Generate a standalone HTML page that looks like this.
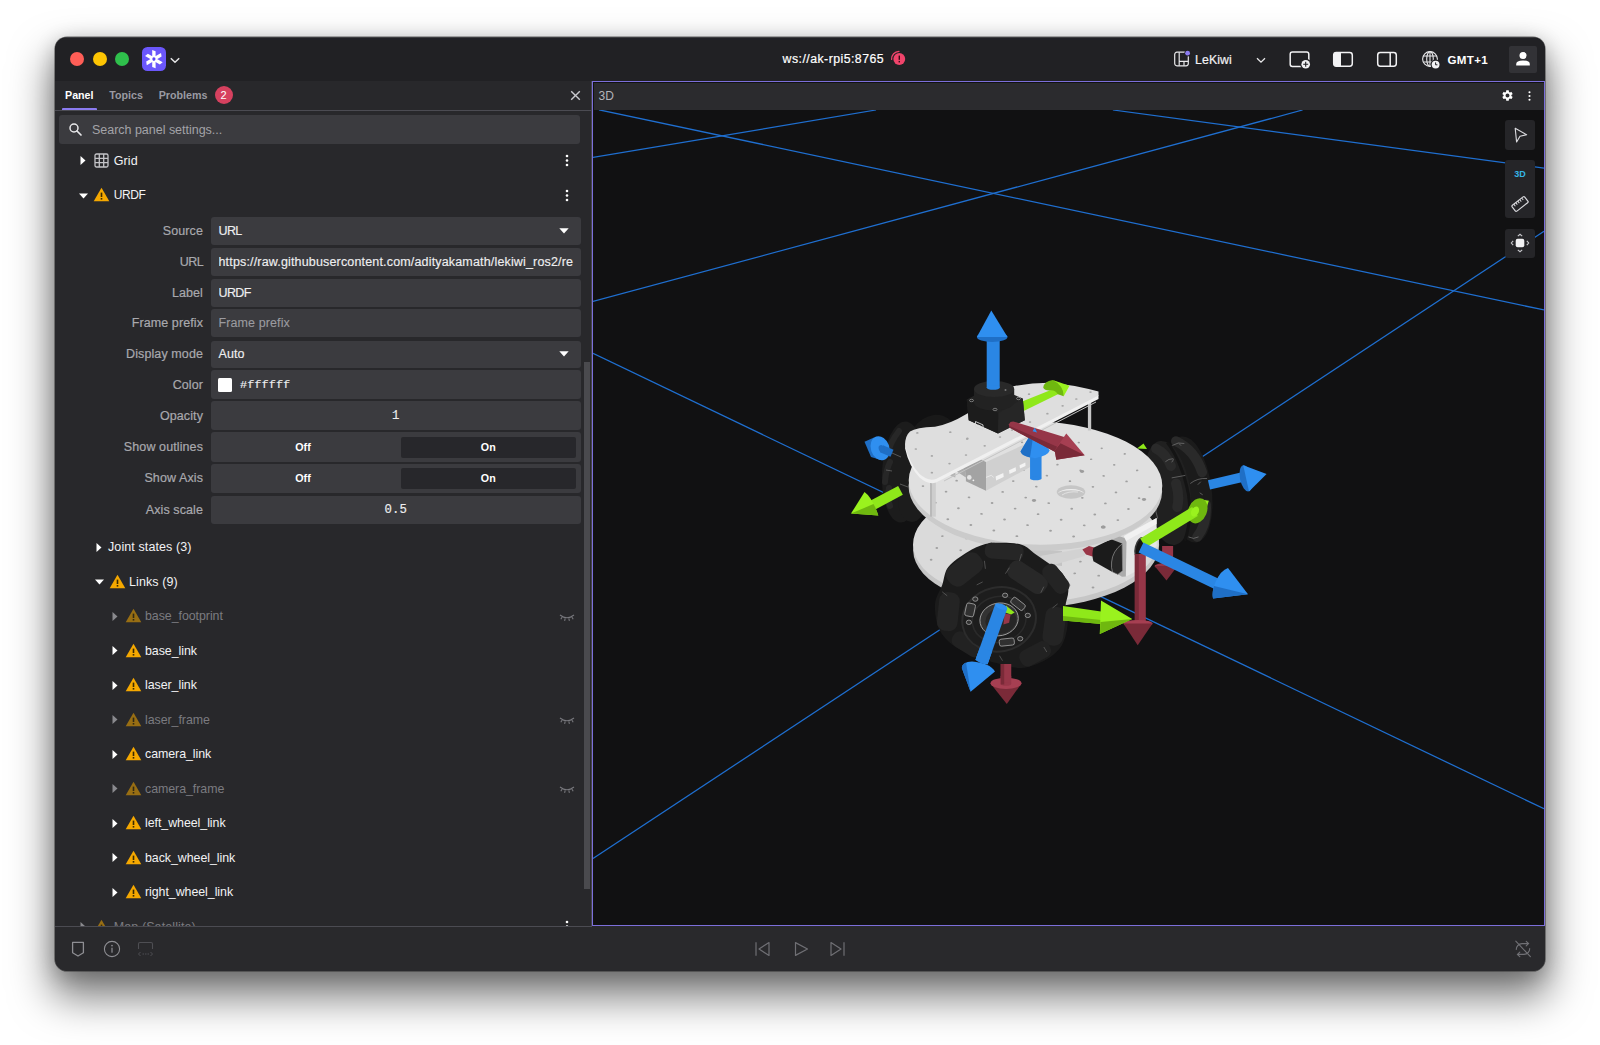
<!DOCTYPE html>
<html lang="en">
<head>
<meta charset="utf-8">
<title>Foxglove - LeKiwi</title>
<style>
*{box-sizing:border-box;margin:0;padding:0}
html,body{width:1600px;height:1045px;overflow:hidden;background:#fff}
body{font-family:"Liberation Sans",sans-serif;font-size:12.5px;letter-spacing:.1px;color:#e6e6e8;position:relative}
.abs{position:absolute}
#shadow{position:absolute;left:55px;top:37px;width:1490px;height:934px;border-radius:12px;
 box-shadow:0 23px 40px 4px rgba(0,0,0,.50),0 5px 20px 1px rgba(0,0,0,.20),0 0 0 .6px rgba(0,0,0,.55)}
#win{position:absolute;left:55px;top:37px;width:1490px;height:934px;border-radius:12px;overflow:hidden;background:#28282b}
#win>*{position:absolute}
/* coordinates inside #win are page coords minus (55,37); use wrapper shifted so children can use page coords */
#pg{left:-55px;top:-37px;width:1600px;height:1045px}
#pg>*{position:absolute}
#titlebar{left:55px;top:37px;width:1490px;height:44px;background:#212124;box-shadow:inset 0 1px 0 rgba(255,255,255,.13)}
.tl{position:absolute;top:52px;width:14px;height:14px;border-radius:50%}
.t{position:absolute;white-space:nowrap;line-height:16px;height:16px}
.lbl{-webkit-text-stroke:.2px #a9a9ae;position:absolute;white-space:nowrap;line-height:16px;height:16px;right:1397px;color:#a9a9ae;text-align:right}
.box{position:absolute;left:211px;width:369.5px;height:28px;background:#3b3b3f;border-radius:3px}
.val{-webkit-text-stroke:.15px #eeeef0;position:absolute;white-space:nowrap;line-height:16px;height:16px;left:218.5px;color:#eeeef0}
.mono{font-family:"Liberation Mono",monospace}
</style>
</head>
<body>
<div id="shadow"></div>
<div id="win"><div id="pg">

<!-- TITLE BAR -->
<div id="titlebar"></div>
<div class="tl" style="left:70px;background:#fe5e57"></div>
<div class="tl" style="left:92.5px;background:#fdc503"></div>
<div class="tl" style="left:115px;background:#2fc04c"></div>


<!-- app icon -->
<div style="left:142px;top:47px;width:24px;height:24px;border-radius:5.5px;background:#6b57fb"></div>
<svg style="left:142px;top:47px" width="24" height="24" viewBox="0 0 24 24"><g fill="#fff" transform="translate(11.9 12.1)"><path d="M-1.7 -9.2 L1.7 -7.9 L1.7 9.2 L-1.7 7.9 Z" transform="rotate(0)"/><path d="M-1.7 -9.2 L1.7 -7.9 L1.7 9.2 L-1.7 7.9 Z" transform="rotate(60)"/><path d="M-1.7 -9.2 L1.7 -7.9 L1.7 9.2 L-1.7 7.9 Z" transform="rotate(120)"/><circle r="3.1"/></g><ellipse cx="11.9" cy="12.100" rx="1.600" ry="1.800" fill="#5a45f0"/></svg>
<svg style="left:170.3px;top:56.800px" width="10" height="7" viewBox="0 0 10 7"><path d="M0.800 1.200 L5 5.300 L9.200 1.200" stroke="#e4e4e6" stroke-width="1.500" fill="none"/></svg>

<!-- title -->
<div class="t" style="left:782.6px;top:51px;color:#fff;font-size:12.3px;letter-spacing:.46px;-webkit-text-stroke:.2px #fff" id="wsTxt">ws://ak-rpi5:8765</div>
<svg style="left:889px;top:49px" width="20" height="20" viewBox="0 0 20 20">
 <circle cx="10.3" cy="10" r="5.9" fill="#f0446b"/>
 <path d="M2.6 10.4 A7.7 7.7 0 0 1 10 2.3" stroke="#f0446b" stroke-width="1.3" fill="none" stroke-linecap="round"/>
 <rect x="9.6" y="6.6" width="1.4" height="4.2" fill="#3a0a16"/><rect x="9.6" y="11.9" width="1.4" height="1.5" fill="#3a0a16"/>
</svg>

<!-- layout -->
<svg style="left:1173px;top:50px" width="18" height="18" viewBox="0 0 18 18">
 <rect x="1.7" y="2.2" width="13.6" height="13.6" rx="2.2" fill="none" stroke="#e8e8ea" stroke-width="1.2"/>
 <path d="M6.2 2.2 V15.8 M6.2 11.3 H15.3 M11 11.3 V15.8" stroke="#e8e8ea" stroke-width="1.2" fill="none"/>
 <circle cx="14.6" cy="3.2" r="3.3" fill="#212124"/><circle cx="14.6" cy="3.2" r="2.4" fill="#8b7bf0"/>
</svg>
<div class="t" style="left:1195px;top:51.5px;color:#f2f2f4;font-size:12.3px;-webkit-text-stroke:.2px #f2f2f4" id="lekiwi">LeKiwi</div>
<svg style="left:1255.5px;top:56.5px" width="10" height="7" viewBox="0 0 10 7"><path d="M1 1.2 L5 5.2 L9 1.2" stroke="#e8e8ea" stroke-width="1.3" fill="none"/></svg>
<!-- add panel -->
<svg style="left:1288px;top:49px" width="25" height="22" viewBox="0 0 25 22">
 <rect x="2.2" y="3" width="18.6" height="14.4" rx="2.2" fill="none" stroke="#f2f2f4" stroke-width="1.5"/>
 <circle cx="17.7" cy="15.2" r="5.6" fill="#212124"/><circle cx="17.7" cy="15.2" r="4.3" fill="#f2f2f4"/>
 <path d="M17.7 12.7 V17.7 M15.2 15.2 H20.2" stroke="#1f1f23" stroke-width="1.1"/>
</svg>
<!-- left sidebar -->
<svg style="left:1332px;top:50px" width="22" height="18" viewBox="0 0 22 18">
 <rect x="1.7" y="2.6" width="18.6" height="13.6" rx="2.6" fill="none" stroke="#f2f2f4" stroke-width="1.5"/>
 <path d="M4 2.6 H9 V16.2 H4 Q1.7 16.2 1.7 13.8 V5 Q1.7 2.6 4 2.6Z" fill="#f2f2f4"/>
</svg>
<!-- right sidebar -->
<svg style="left:1375.5px;top:50px" width="22" height="18" viewBox="0 0 22 18">
 <rect x="1.7" y="2.6" width="18.6" height="13.6" rx="2.6" fill="none" stroke="#f2f2f4" stroke-width="1.5"/>
 <path d="M14.2 2.6 V16.2" stroke="#f2f2f4" stroke-width="1.5"/>
</svg>
<!-- globe clock -->
<svg style="left:1420.5px;top:49.5px" width="20" height="20" viewBox="0 0 20 20">
 <g fill="none" stroke="#e8e8ea" stroke-width="1.1">
 <circle cx="9" cy="9" r="7.4"/><ellipse cx="9" cy="9" rx="3.3" ry="7.4"/><path d="M9 1.6 V16.4 M2.3 6 H15.7 M2.3 12 H15.7"/>
 </g>
 <circle cx="14.6" cy="14.6" r="5" fill="#212124"/><circle cx="14.6" cy="14.6" r="3.9" fill="#f2f2f4"/>
 <path d="M14.6 12.4 V14.8 H16.4" stroke="#1f1f23" stroke-width="1" fill="none"/>
</svg>
<div class="t" style="left:1447.5px;top:51.5px;color:#fff;font-size:11.6px;letter-spacing:.3px;font-weight:700" id="gmt">GMT+1</div>
<!-- user -->
<div style="left:1509px;top:45.5px;width:28px;height:27.5px;background:#323236;border-radius:2px"></div>
<svg style="left:1514px;top:50px" width="18" height="18" viewBox="0 0 18 18"><circle cx="9" cy="5.6" r="3.5" fill="#fff"/><path d="M2.2 15.6 V14 Q2.2 10.4 9 10.4 Q15.8 10.4 15.8 14 V15.6 Z" fill="#fff"/></svg>

<!-- SIDEBAR -->
<div id="sidebar" style="left:55px;top:81px;width:536px;height:845px;background:#28282b"></div>


<!-- tabs -->
<div class="t" style="left:65px;top:87px;font-size:10.7px;letter-spacing:0;font-weight:700;color:#fff" id="tabPanel">Panel</div>
<div style="left:61.5px;top:108px;width:35.5px;height:2.5px;background:#8b7bf0;border-radius:1px"></div>
<div class="t" style="left:109.3px;top:87px;font-size:10.7px;letter-spacing:0;font-weight:700;color:#9a9aa2" id="tabTopics">Topics</div>
<div class="t" style="left:158.7px;top:87px;font-size:10.7px;letter-spacing:0;font-weight:700;color:#9a9aa2" id="tabProblems">Problems</div>
<div style="left:214.7px;top:86px;width:18px;height:18px;border-radius:9px;background:#d6415f;color:#fff;font-size:11px;line-height:18px;text-align:center">2</div>
<svg style="left:570px;top:90px" width="11" height="11" viewBox="0 0 11 11"><path d="M1.2 1.2 L9.8 9.8 M9.8 1.2 L1.2 9.8" stroke="#c9c9ce" stroke-width="1.4" fill="none"/></svg>
<div style="left:55px;top:110px;width:536px;height:1px;background:#4b4b52"></div>
<!-- search -->
<div style="left:59px;top:115px;width:520.5px;height:29px;background:#3b3b3f;border-radius:3px"></div>
<svg style="left:68px;top:122px" width="15" height="15" viewBox="0 0 15 15"><circle cx="6" cy="6" r="4" stroke="#e8e8ea" stroke-width="1.5" fill="none"/><path d="M9 9 L13 13" stroke="#e8e8ea" stroke-width="1.7" stroke-linecap="round"/></svg>
<div class="t" style="left:92px;top:121.5px;color:#a3a3a8;letter-spacing:-.02px" id="searchTxt">Search panel settings...</div>

<!-- Grid row -->
<svg style="left:79px;top:155px" width="8" height="11" viewBox="0 0 8 11"><path d="M1.5 1 L6.5 5.5 L1.5 10 Z" fill="#fff"/></svg>
<svg style="left:93.5px;top:153px" width="15" height="15" viewBox="0 0 15 15"><rect x="1" y="1" width="13" height="13" rx="1.5" fill="none" stroke="#c4c4c8" stroke-width="1.3"/><path d="M5.3 1V14M9.7 1V14M1 5.3H14M1 9.7H14" stroke="#c4c4c8" stroke-width="1.3"/></svg>
<div class="t" style="left:113.7px;top:152.5px;color:#f2f2f4" id="gridTxt">Grid</div>
<svg style="left:565px;top:154px" width="4" height="13" viewBox="0 0 4 13"><circle cx="2" cy="2" r="1.3" fill="#fff"/><circle cx="2" cy="6.5" r="1.3" fill="#fff"/><circle cx="2" cy="11" r="1.3" fill="#fff"/></svg>

<!-- URDF row -->
<svg style="left:77.5px;top:191.5px" width="11" height="8" viewBox="0 0 11 8"><path d="M1 1.5 L10 1.5 L5.5 6.5 Z" fill="#fff"/></svg>
<svg class="warn" style="left:93px;top:187px" width="17" height="15" viewBox="0 0 17 15"><path d="M8.5 0.8 L16.3 14.2 H0.7 Z" fill="#f5a800"/><rect x="7.7" y="5.6" width="1.6" height="4.4" fill="#3a2a00"/><rect x="7.7" y="11" width="1.6" height="1.6" fill="#3a2a00"/></svg>
<div class="t" style="left:113.7px;top:187px;color:#f2f2f4;font-size:12px;letter-spacing:-.4px" id="urdfTxt">URDF</div>
<svg style="left:565px;top:188.5px" width="4" height="13" viewBox="0 0 4 13"><circle cx="2" cy="2" r="1.3" fill="#fff"/><circle cx="2" cy="6.5" r="1.3" fill="#fff"/><circle cx="2" cy="11" r="1.3" fill="#fff"/></svg>
<div class="lbl" style="top:223.0px">Source</div>
<div class="box" style="top:217px;height:28px"></div>
<div class="val" style="top:223.0px;letter-spacing:-.6px">URL</div>
<svg style="left:558.5px;top:228.0px" width="10" height="6" viewBox="0 0 10 6"><path d="M0.3 0.3 L9.7 0.3 L5 5.5 Z" fill="#fff"/></svg>
<div class="lbl" style="top:254.1px;letter-spacing:-.6px">URL</div>
<div class="box" style="top:248px;height:28.3px"></div>
<div class="val" style="top:254.1px;width:355px;overflow:hidden;letter-spacing:.165px">https://raw.githubusercontent.com/adityakamath/lekiwi_ros2/re</div>
<div class="lbl" style="top:285.2px">Label</div>
<div class="box" style="top:279.4px;height:27.6px"></div>
<div class="val" style="top:285.2px;width:355px;overflow:hidden;letter-spacing:-.6px">URDF</div>
<div class="lbl" style="top:315.3px">Frame prefix</div>
<div class="box" style="top:309.2px;height:28.3px"></div>
<div class="val" style="top:315.3px;color:#9b9ba0;-webkit-text-stroke:.1px #9b9ba0">Frame prefix</div>
<div class="lbl" style="top:346.4px">Display mode</div>
<div class="box" style="top:340.6px;height:27.6px"></div>
<div class="val" style="top:346.4px">Auto</div>
<svg style="left:558.5px;top:351.4px" width="10" height="6" viewBox="0 0 10 6"><path d="M0.3 0.3 L9.7 0.3 L5 5.5 Z" fill="#fff"/></svg>
<div class="lbl" style="top:376.6px">Color</div>
<div class="box" style="top:370.3px;height:28.6px"></div>
<div style="left:217.5px;top:377.6px;width:14.5px;height:14px;background:#fff;border-radius:1.5px"></div>
<div class="val mono" style="left:240px;top:376.6px;font-size:11.8px">#ffffff</div>
<div class="lbl" style="top:407.6px">Opacity</div>
<div class="box" style="top:401.3px;height:28.6px"></div>
<div class="val mono" style="left:211px;width:369.5px;text-align:center;top:407.6px;font-size:12.3px">1</div>
<div class="lbl" style="top:438.9px">Show outlines</div>
<div class="box" style="top:432.3px;height:29.3px"></div>
<div style="left:400.6px;top:436.5px;width:175.4px;height:21px;background:#27272b;border-radius:2px"></div>
<div class="t" style="left:215px;width:176px;text-align:center;top:438.9px;font-size:10.7px;letter-spacing:0;font-weight:700;color:#fff">Off</div>
<div class="t" style="left:400.6px;width:175.4px;text-align:center;top:438.9px;font-size:10.7px;letter-spacing:0;font-weight:700;color:#fff">On</div>
<div class="lbl" style="top:470.3px">Show Axis</div>
<div class="box" style="top:463.7px;height:29.2px"></div>
<div style="left:400.6px;top:467.9px;width:175.4px;height:21px;background:#27272b;border-radius:2px"></div>
<div class="t" style="left:215px;width:176px;text-align:center;top:470.3px;font-size:10.7px;letter-spacing:0;font-weight:700;color:#fff">Off</div>
<div class="t" style="left:400.6px;width:175.4px;text-align:center;top:470.3px;font-size:10.7px;letter-spacing:0;font-weight:700;color:#fff">On</div>
<div class="lbl" style="top:502.1px">Axis scale</div>
<div class="box" style="top:496px;height:28.3px"></div>
<div class="val mono" style="left:211px;width:369.5px;text-align:center;top:502.1px;font-size:12.3px">0.5</div>

<!-- Joint states -->
<svg style="left:95px;top:541.5px" width="8" height="11" viewBox="0 0 8 11"><path d="M1.5 1 L6.5 5.5 L1.5 10 Z" fill="#fff"/></svg>
<div class="t" style="left:108px;top:539px;color:#f2f2f4">Joint states (3)</div>
<!-- Links -->
<svg style="left:93.5px;top:578px" width="11" height="8" viewBox="0 0 11 8"><path d="M1 1.5 L10 1.5 L5.5 6.5 Z" fill="#fff"/></svg>
<svg style="left:108.5px;top:573.5px" width="17" height="15" viewBox="0 0 17 15"><path d="M8.5 0.8 L16.3 14.2 H0.7 Z" fill="#f5a800"/><rect x="7.7" y="5.6" width="1.6" height="4.4" fill="#3a2a00"/><rect x="7.7" y="11" width="1.6" height="1.6" fill="#3a2a00"/></svg>
<div class="t" style="left:129px;top:573.5px;color:#f2f2f4">Links (9)</div>
<svg style="left:111px;top:610.5px" width="8" height="11" viewBox="0 0 8 11"><path d="M1.5 1 L6.5 5.5 L1.5 10 Z" fill="#8a8a8e"/></svg>
<svg style="left:124.5px;top:608.0px;opacity:.55;" width="17" height="15" viewBox="0 0 17 15"><path d="M8.5 0.8 L16.3 14.2 H0.7 Z" fill="#f5a800"/><rect x="7.7" y="5.6" width="1.6" height="4.4" fill="#3a2a00"/><rect x="7.7" y="11" width="1.6" height="1.6" fill="#3a2a00"/></svg>
<div class="t" style="left:145px;top:608.0px;letter-spacing:-.05px;font-size:12.4px;color:#7b7b80">base_footprint</div>
<svg style="left:559px;top:613.5px" width="16" height="8" viewBox="0 0 16 8"><path d="M1 1 Q8 6.5 15 1" stroke="#77777c" stroke-width="1.1" fill="none"/><path d="M3.2 3 L1.8 5.2 M6.2 4.3 L5.6 6.8 M9.8 4.3 L10.4 6.8 M12.8 3 L14.2 5.2" stroke="#77777c" stroke-width="1.1" fill="none"/></svg>
<svg style="left:111px;top:645.0px" width="8" height="11" viewBox="0 0 8 11"><path d="M1.5 1 L6.5 5.5 L1.5 10 Z" fill="#fff"/></svg>
<svg style="left:124.5px;top:642.5px;" width="17" height="15" viewBox="0 0 17 15"><path d="M8.5 0.8 L16.3 14.2 H0.7 Z" fill="#f5a800"/><rect x="7.7" y="5.6" width="1.6" height="4.4" fill="#3a2a00"/><rect x="7.7" y="11" width="1.6" height="1.6" fill="#3a2a00"/></svg>
<div class="t" style="left:145px;top:642.5px;letter-spacing:-.05px;font-size:12.4px;color:#f2f2f4">base_link</div>
<svg style="left:111px;top:679.5px" width="8" height="11" viewBox="0 0 8 11"><path d="M1.5 1 L6.5 5.5 L1.5 10 Z" fill="#fff"/></svg>
<svg style="left:124.5px;top:677.0px;" width="17" height="15" viewBox="0 0 17 15"><path d="M8.5 0.8 L16.3 14.2 H0.7 Z" fill="#f5a800"/><rect x="7.7" y="5.6" width="1.6" height="4.4" fill="#3a2a00"/><rect x="7.7" y="11" width="1.6" height="1.6" fill="#3a2a00"/></svg>
<div class="t" style="left:145px;top:677.0px;letter-spacing:-.05px;font-size:12.4px;color:#f2f2f4">laser_link</div>
<svg style="left:111px;top:714.0px" width="8" height="11" viewBox="0 0 8 11"><path d="M1.5 1 L6.5 5.5 L1.5 10 Z" fill="#8a8a8e"/></svg>
<svg style="left:124.5px;top:711.5px;opacity:.55;" width="17" height="15" viewBox="0 0 17 15"><path d="M8.5 0.8 L16.3 14.2 H0.7 Z" fill="#f5a800"/><rect x="7.7" y="5.6" width="1.6" height="4.4" fill="#3a2a00"/><rect x="7.7" y="11" width="1.6" height="1.6" fill="#3a2a00"/></svg>
<div class="t" style="left:145px;top:711.5px;letter-spacing:-.05px;font-size:12.4px;color:#7b7b80">laser_frame</div>
<svg style="left:559px;top:717.0px" width="16" height="8" viewBox="0 0 16 8"><path d="M1 1 Q8 6.5 15 1" stroke="#77777c" stroke-width="1.1" fill="none"/><path d="M3.2 3 L1.8 5.2 M6.2 4.3 L5.6 6.8 M9.8 4.3 L10.4 6.8 M12.8 3 L14.2 5.2" stroke="#77777c" stroke-width="1.1" fill="none"/></svg>
<svg style="left:111px;top:748.5px" width="8" height="11" viewBox="0 0 8 11"><path d="M1.5 1 L6.5 5.5 L1.5 10 Z" fill="#fff"/></svg>
<svg style="left:124.5px;top:746.0px;" width="17" height="15" viewBox="0 0 17 15"><path d="M8.5 0.8 L16.3 14.2 H0.7 Z" fill="#f5a800"/><rect x="7.7" y="5.6" width="1.6" height="4.4" fill="#3a2a00"/><rect x="7.7" y="11" width="1.6" height="1.6" fill="#3a2a00"/></svg>
<div class="t" style="left:145px;top:746.0px;letter-spacing:-.05px;font-size:12.4px;color:#f2f2f4">camera_link</div>
<svg style="left:111px;top:783.0px" width="8" height="11" viewBox="0 0 8 11"><path d="M1.5 1 L6.5 5.5 L1.5 10 Z" fill="#8a8a8e"/></svg>
<svg style="left:124.5px;top:780.5px;opacity:.55;" width="17" height="15" viewBox="0 0 17 15"><path d="M8.5 0.8 L16.3 14.2 H0.7 Z" fill="#f5a800"/><rect x="7.7" y="5.6" width="1.6" height="4.4" fill="#3a2a00"/><rect x="7.7" y="11" width="1.6" height="1.6" fill="#3a2a00"/></svg>
<div class="t" style="left:145px;top:780.5px;letter-spacing:-.05px;font-size:12.4px;color:#7b7b80">camera_frame</div>
<svg style="left:559px;top:786.0px" width="16" height="8" viewBox="0 0 16 8"><path d="M1 1 Q8 6.5 15 1" stroke="#77777c" stroke-width="1.1" fill="none"/><path d="M3.2 3 L1.8 5.2 M6.2 4.3 L5.6 6.8 M9.8 4.3 L10.4 6.8 M12.8 3 L14.2 5.2" stroke="#77777c" stroke-width="1.1" fill="none"/></svg>
<svg style="left:111px;top:817.5px" width="8" height="11" viewBox="0 0 8 11"><path d="M1.5 1 L6.5 5.5 L1.5 10 Z" fill="#fff"/></svg>
<svg style="left:124.5px;top:815.0px;" width="17" height="15" viewBox="0 0 17 15"><path d="M8.5 0.8 L16.3 14.2 H0.7 Z" fill="#f5a800"/><rect x="7.7" y="5.6" width="1.6" height="4.4" fill="#3a2a00"/><rect x="7.7" y="11" width="1.6" height="1.6" fill="#3a2a00"/></svg>
<div class="t" style="left:145px;top:815.0px;letter-spacing:-.05px;font-size:12.4px;color:#f2f2f4">left_wheel_link</div>
<svg style="left:111px;top:852.0px" width="8" height="11" viewBox="0 0 8 11"><path d="M1.5 1 L6.5 5.5 L1.5 10 Z" fill="#fff"/></svg>
<svg style="left:124.5px;top:849.5px;" width="17" height="15" viewBox="0 0 17 15"><path d="M8.5 0.8 L16.3 14.2 H0.7 Z" fill="#f5a800"/><rect x="7.7" y="5.6" width="1.6" height="4.4" fill="#3a2a00"/><rect x="7.7" y="11" width="1.6" height="1.6" fill="#3a2a00"/></svg>
<div class="t" style="left:145px;top:849.5px;letter-spacing:-.05px;font-size:12.4px;color:#f2f2f4">back_wheel_link</div>
<svg style="left:111px;top:886.5px" width="8" height="11" viewBox="0 0 8 11"><path d="M1.5 1 L6.5 5.5 L1.5 10 Z" fill="#fff"/></svg>
<svg style="left:124.5px;top:884.0px;" width="17" height="15" viewBox="0 0 17 15"><path d="M8.5 0.8 L16.3 14.2 H0.7 Z" fill="#f5a800"/><rect x="7.7" y="5.6" width="1.6" height="4.4" fill="#3a2a00"/><rect x="7.7" y="11" width="1.6" height="1.6" fill="#3a2a00"/></svg>
<div class="t" style="left:145px;top:884.0px;letter-spacing:-.05px;font-size:12.4px;color:#f2f2f4">right_wheel_link</div>

<svg style="left:79px;top:921px" width="8" height="11" viewBox="0 0 8 11"><path d="M1.5 1 L6.5 5.5 L1.5 10 Z" fill="#8a8a8e"/></svg>
<svg style="left:93px;top:918.5px;opacity:.55" width="17" height="15" viewBox="0 0 17 15"><path d="M8.5 0.8 L16.3 14.2 H0.7 Z" fill="#f5a800"/><rect x="7.7" y="5.6" width="1.6" height="4.4" fill="#3a2a00"/><rect x="7.7" y="11" width="1.6" height="1.6" fill="#3a2a00"/></svg>
<div class="t" style="left:113.7px;top:918.5px;color:#7b7b80">Map (Satellite)</div>
<svg style="left:565px;top:920px" width="4" height="13" viewBox="0 0 4 13"><circle cx="2" cy="2" r="1.3" fill="#fff"/><circle cx="2" cy="6.5" r="1.3" fill="#fff"/><circle cx="2" cy="11" r="1.3" fill="#fff"/></svg>
<!-- scrollbar -->
<div style="left:584.2px;top:361.7px;width:6.3px;height:527px;background:#4a4a4e"></div>
<div style="left:590.5px;top:81px;width:1.2px;height:845px;background:#46464b"></div>

<!-- 3D PANEL -->
<div id="p3d" style="left:592px;top:81px;width:953px;height:845px;background:#111112;border:1.8px solid #7c6fda"></div>
<div id="p3dhead" style="left:593.5px;top:82.500px;width:950px;height:27.500px;background:#2b2b2e"></div>


<div class="t" style="left:598.5px;top:87.5px;color:#b4b4b9;font-size:12px;letter-spacing:0" id="t3d">3D</div>
<!-- gear -->
<svg style="left:1501px;top:89px" width="13" height="13" viewBox="0 0 24 24"><path fill="#fff" d="M19.14 12.94c.04-.3.06-.61.06-.94 0-.32-.02-.64-.07-.94l2.03-1.58a.49.49 0 0 0 .12-.61l-1.92-3.32a.488.488 0 0 0-.59-.22l-2.39.96c-.5-.38-1.03-.7-1.62-.94l-.36-2.54a.484.484 0 0 0-.48-.41h-3.84c-.24 0-.43.17-.47.41l-.36 2.54c-.59.24-1.13.57-1.62.94l-2.39-.96c-.22-.08-.47 0-.59.22L2.74 8.87c-.12.21-.08.47.12.61l2.03 1.58c-.05.3-.09.63-.09.94s.02.64.07.94l-2.03 1.58a.49.49 0 0 0-.12.61l1.92 3.32c.12.22.37.29.59.22l2.39-.96c.5.38 1.03.7 1.62.94l.36 2.54c.05.24.24.41.48.41h3.84c.24 0 .44-.17.47-.41l.36-2.54c.59-.24 1.13-.56 1.62-.94l2.39.96c.22.08.47 0 .59-.22l1.92-3.32c.12-.22.07-.47-.12-.61l-2.01-1.58zM12 15.6c-1.98 0-3.600-1.62-3.600-3.600s1.62-3.600 3.600-3.600 3.600 1.620 3.600 3.600-1.620 3.600-3.600 3.600z"/></svg>
<svg style="left:1527.5px;top:90.5px" width="3" height="10" viewBox="0 0 3 10"><circle cx="1.5" cy="1.3" r="1.05" fill="#fff"/><circle cx="1.5" cy="5" r="1.05" fill="#fff"/><circle cx="1.5" cy="8.7" r="1.05" fill="#fff"/></svg>

<!-- 3D canvas -->
<svg id="scene" style="left:593px;top:110px" width="951" height="815" viewBox="593 110 951 815">
 <g stroke="#1f6fd0" stroke-width="1.25" fill="none" id="gridlines">
  <line x1="599" y1="109.8" x2="1544" y2="310"/>
  <line x1="593" y1="157.5" x2="876" y2="110"/>
  <line x1="593" y1="301.4" x2="1302.6" y2="110"/>
  <line x1="1112.9" y1="110" x2="1544" y2="168.1"/>
  <line x1="593" y1="353.4" x2="1544" y2="808.8"/>
  <line x1="593" y1="858.5" x2="1544" y2="231.3"/>
 </g>
 <!--ROBOT--><g id="leftwheel"><ellipse cx="932" cy="448" rx="26" ry="34" transform="rotate(20 932 448)" fill="#191919"/><ellipse cx="903" cy="472" rx="21" ry="50.500" transform="rotate(3 903 472)" fill="#1c1c1c"/><ellipse cx="912" cy="500" rx="14" ry="22" fill="#1c1c1c"/><path d="M887 455 q4 -14 12 -24 M885 482 q1 -12 5 -20 M890 506 q-3 -9 -1 -18" stroke="#272727" stroke-width="6" fill="none" stroke-linecap="round"/><g stroke="#7d7d7d" stroke-width=".6" fill="none"><path d="M892 453 l9 4"/><path d="M900 484 l8 3"/><path d="M886 470 l6 1"/></g></g>
<g id="rightwheel"><polygon points="1137,448.500 1143.500,443.500 1147,449" fill="#8fe81a"/><ellipse cx="1189" cy="489.500" rx="22.500" ry="53.500" transform="rotate(-8 1189 489.500)" fill="#1b1b1b"/><ellipse cx="1167.500" cy="493" rx="23" ry="52.500" transform="rotate(-8 1167.500 493)" fill="#202020"/><path d="M1167.3 442.4 Q1182.2 462.3 1188.5 494.7 Q1192.2 519.5 1184.7 540.7" stroke="#141414" stroke-width="3" fill="none"/><g fill="none" stroke="#2a2a2a" stroke-width="10" stroke-linecap="round"><path d="M1156.1 448.6 Q1166.1 453.6 1171.0 466.0"/><path d="M1176.0 483.5 Q1179.8 495.9 1177.3 507.1"/><path d="M1176.0 441.2 Q1194.7 449.9 1202.1 472.3"/><path d="M1205.9 504.6 Q1207.1 524.5 1197.2 536.9"/></g><g fill="none" stroke="#9a9a9a" stroke-width=".6" opacity=".85"><path d="M1171.7 477.9 L1185.3 475.4"/><path d="M1165.4 461.7 q3 -3 8 -3"/><path d="M1172.3 445.5 q6 -4 12 -2"/><path d="M1190.3 483.5 Q1197.2 477.9 1207.1 478.5"/><path d="M1156.7 504.6 q-2 7 1 14"/><path d="M1188.5 536.9 q5 3 10 0"/><path d="M1197.8 484.7 l3 -3 M1199.7 492.8 l3 2 M1171.7 462.3 l2 -3 M1179.1 443.7 l2 2"/></g></g>
<g id="lowerplate" transform="rotate(-1.5 1036 542)"><ellipse cx="1036" cy="547.5" rx="123" ry="60" fill="#c6c6c6"/><ellipse cx="1036" cy="542" rx="123" ry="60" fill="#dadada"/><g fill="#a0a0a0"><ellipse cx="954.5" cy="510.4" rx="1.22" ry="0.83"/><ellipse cx="948.6" cy="522.1" rx="1.25" ry="0.85"/><ellipse cx="942.6" cy="533.7" rx="1.28" ry="0.87"/><ellipse cx="936.7" cy="545.4" rx="1.31" ry="0.89"/><ellipse cx="930.7" cy="557.0" rx="1.34" ry="0.91"/><ellipse cx="984.3" cy="501.7" rx="1.20" ry="0.81"/><ellipse cx="978.4" cy="513.4" rx="1.23" ry="0.83"/><ellipse cx="972.4" cy="525.0" rx="1.26" ry="0.85"/><ellipse cx="966.5" cy="536.6" rx="1.29" ry="0.87"/><ellipse cx="960.5" cy="548.3" rx="1.32" ry="0.90"/><ellipse cx="954.6" cy="559.9" rx="1.35" ry="0.92"/><ellipse cx="948.6" cy="571.6" rx="1.38" ry="0.94"/><ellipse cx="1014.2" cy="493.0" rx="1.17" ry="0.80"/><ellipse cx="1008.2" cy="504.6" rx="1.20" ry="0.82"/><ellipse cx="1002.3" cy="516.3" rx="1.23" ry="0.84"/><ellipse cx="996.3" cy="527.9" rx="1.26" ry="0.86"/><ellipse cx="990.4" cy="539.5" rx="1.29" ry="0.88"/><ellipse cx="984.4" cy="551.2" rx="1.32" ry="0.90"/><ellipse cx="978.5" cy="562.8" rx="1.35" ry="0.92"/><ellipse cx="972.5" cy="574.5" rx="1.38" ry="0.94"/><ellipse cx="966.5" cy="586.1" rx="1.41" ry="0.96"/><ellipse cx="1038.0" cy="495.9" rx="1.18" ry="0.80"/><ellipse cx="1032.1" cy="507.5" rx="1.21" ry="0.82"/><ellipse cx="1026.1" cy="519.2" rx="1.24" ry="0.84"/><ellipse cx="1020.2" cy="530.8" rx="1.27" ry="0.86"/><ellipse cx="1014.2" cy="542.4" rx="1.30" ry="0.88"/><ellipse cx="1008.3" cy="554.1" rx="1.33" ry="0.91"/><ellipse cx="1002.3" cy="565.7" rx="1.36" ry="0.93"/><ellipse cx="996.4" cy="577.4" rx="1.39" ry="0.95"/><ellipse cx="990.4" cy="589.0" rx="1.42" ry="0.97"/><ellipse cx="1061.9" cy="498.8" rx="1.19" ry="0.81"/><ellipse cx="1055.9" cy="510.4" rx="1.22" ry="0.83"/><ellipse cx="1050.0" cy="522.1" rx="1.25" ry="0.85"/><ellipse cx="1044.0" cy="533.7" rx="1.28" ry="0.87"/><ellipse cx="1038.1" cy="545.3" rx="1.31" ry="0.89"/><ellipse cx="1032.1" cy="557.0" rx="1.34" ry="0.91"/><ellipse cx="1026.2" cy="568.6" rx="1.37" ry="0.93"/><ellipse cx="1020.2" cy="580.3" rx="1.40" ry="0.95"/><ellipse cx="1014.3" cy="591.9" rx="1.43" ry="0.97"/><ellipse cx="1085.8" cy="501.7" rx="1.20" ry="0.81"/><ellipse cx="1079.8" cy="513.3" rx="1.23" ry="0.83"/><ellipse cx="1073.9" cy="525.0" rx="1.26" ry="0.85"/><ellipse cx="1067.9" cy="536.6" rx="1.29" ry="0.87"/><ellipse cx="1062.0" cy="548.2" rx="1.32" ry="0.90"/><ellipse cx="1056.0" cy="559.9" rx="1.35" ry="0.92"/><ellipse cx="1050.1" cy="571.5" rx="1.38" ry="0.94"/><ellipse cx="1044.1" cy="583.2" rx="1.41" ry="0.96"/><ellipse cx="1038.2" cy="594.8" rx="1.44" ry="0.98"/><ellipse cx="1109.6" cy="504.6" rx="1.20" ry="0.82"/><ellipse cx="1103.7" cy="516.2" rx="1.23" ry="0.84"/><ellipse cx="1097.7" cy="527.9" rx="1.26" ry="0.86"/><ellipse cx="1091.8" cy="539.5" rx="1.29" ry="0.88"/><ellipse cx="1085.8" cy="551.2" rx="1.32" ry="0.90"/><ellipse cx="1079.9" cy="562.8" rx="1.35" ry="0.92"/><ellipse cx="1073.9" cy="574.4" rx="1.38" ry="0.94"/><ellipse cx="1068.0" cy="586.1" rx="1.41" ry="0.96"/><ellipse cx="1127.6" cy="519.1" rx="1.24" ry="0.84"/><ellipse cx="1121.6" cy="530.8" rx="1.27" ry="0.86"/><ellipse cx="1115.7" cy="542.4" rx="1.30" ry="0.88"/><ellipse cx="1109.7" cy="554.1" rx="1.33" ry="0.91"/><ellipse cx="1103.7" cy="565.7" rx="1.36" ry="0.93"/><ellipse cx="1097.8" cy="577.3" rx="1.39" ry="0.95"/><ellipse cx="1091.8" cy="589.0" rx="1.42" ry="0.97"/><ellipse cx="1145.5" cy="533.7" rx="1.28" ry="0.87"/><ellipse cx="1139.5" cy="545.3" rx="1.31" ry="0.89"/><ellipse cx="1133.6" cy="557.0" rx="1.34" ry="0.91"/><ellipse cx="1127.6" cy="568.6" rx="1.37" ry="0.93"/></g></g>
<g id="between"><polygon points="1000,546 1062,551 1062,566 1000,560" fill="#c4c4c4"/><polygon points="1040,556 1085,548 1085,556 1050,566" fill="#d2d2d2"/><polygon points="1082.400,549.500 1089,546 1094,547.500 1094,557 1086,554.500" fill="#9a3647"/><path d="M1124 536 L1156.600 518 L1156.600 546 L1137.500 562.200 L1136.500 571 L1126 576.500 Z" fill="#e6e6e6"/><path d="M1124 536 L1156.600 518 L1156.600 524 L1126 541 Z" fill="#f2f2f2"/><path d="M1111 539 L1118.800 536 L1124.500 538 L1126.500 542 L1125.800 576.500 L1122 576.800 L1116 573 Z" fill="#ababab"/><path d="M1093.400 547.800 L1111.100 539.200 L1122.200 543.500 L1122.600 570.800 L1117.800 574.400 L1111.100 571.300 L1093.400 561.200 Q1091.500 554 1093.400 547.800Z" fill="#1b1b1b"/><path d="M1122.200 543.800 Q1112.500 551 1111.600 562 Q1111 568 1112.500 572 L1117.800 574.400 L1122.600 570.800Z" fill="#262626" stroke="#b5b5b5" stroke-width=".55"/><ellipse cx="1140.300" cy="547.800" rx="5.600" ry="11" transform="rotate(14 1140.300 547.800)" fill="#3a3a3a"/><ellipse cx="1140.800" cy="548" rx="4.600" ry="10" transform="rotate(14 1140.800 548)" fill="#161616"/></g>
<g id="midplate"><g transform="rotate(1.5 1035.500 483)"><ellipse cx="1035.500" cy="488.800" rx="126.800" ry="61.800" fill="#cbcbcb"/><ellipse cx="1035.500" cy="483" rx="126.800" ry="61.600" fill="#e0e0e0"/><g fill="#a0a0a0"><ellipse cx="964.4" cy="444.0" rx="1.20" ry="0.82"/><ellipse cx="954.0" cy="455.3" rx="1.23" ry="0.84"/><ellipse cx="943.7" cy="466.5" rx="1.26" ry="0.86"/><ellipse cx="933.4" cy="477.8" rx="1.29" ry="0.88"/><ellipse cx="923.1" cy="489.0" rx="1.32" ry="0.89"/><ellipse cx="997.8" cy="437.8" rx="1.19" ry="0.81"/><ellipse cx="987.5" cy="449.0" rx="1.21" ry="0.83"/><ellipse cx="977.2" cy="460.3" rx="1.24" ry="0.84"/><ellipse cx="966.9" cy="471.5" rx="1.27" ry="0.86"/><ellipse cx="956.6" cy="482.8" rx="1.30" ry="0.88"/><ellipse cx="946.3" cy="494.0" rx="1.33" ry="0.90"/><ellipse cx="935.9" cy="505.3" rx="1.36" ry="0.92"/><ellipse cx="1031.3" cy="431.5" rx="1.17" ry="0.80"/><ellipse cx="1021.0" cy="442.8" rx="1.20" ry="0.81"/><ellipse cx="1010.7" cy="454.0" rx="1.23" ry="0.83"/><ellipse cx="1000.4" cy="465.3" rx="1.26" ry="0.85"/><ellipse cx="990.1" cy="476.5" rx="1.28" ry="0.87"/><ellipse cx="979.7" cy="487.8" rx="1.31" ry="0.89"/><ellipse cx="969.4" cy="499.1" rx="1.34" ry="0.91"/><ellipse cx="959.1" cy="510.3" rx="1.37" ry="0.93"/><ellipse cx="948.8" cy="521.6" rx="1.40" ry="0.95"/><ellipse cx="1054.5" cy="436.5" rx="1.18" ry="0.80"/><ellipse cx="1044.2" cy="447.8" rx="1.21" ry="0.82"/><ellipse cx="1033.9" cy="459.0" rx="1.24" ry="0.84"/><ellipse cx="1023.5" cy="470.3" rx="1.27" ry="0.86"/><ellipse cx="1013.2" cy="481.6" rx="1.30" ry="0.88"/><ellipse cx="1002.9" cy="492.8" rx="1.32" ry="0.90"/><ellipse cx="992.6" cy="504.1" rx="1.35" ry="0.92"/><ellipse cx="982.3" cy="515.3" rx="1.38" ry="0.94"/><ellipse cx="972.0" cy="526.6" rx="1.41" ry="0.96"/><ellipse cx="1077.7" cy="441.5" rx="1.20" ry="0.81"/><ellipse cx="1067.3" cy="452.8" rx="1.22" ry="0.83"/><ellipse cx="1057.0" cy="464.1" rx="1.25" ry="0.85"/><ellipse cx="1046.7" cy="475.3" rx="1.28" ry="0.87"/><ellipse cx="1036.4" cy="486.6" rx="1.31" ry="0.89"/><ellipse cx="1026.1" cy="497.8" rx="1.34" ry="0.91"/><ellipse cx="1015.8" cy="509.1" rx="1.37" ry="0.93"/><ellipse cx="1005.5" cy="520.3" rx="1.39" ry="0.95"/><ellipse cx="995.1" cy="531.6" rx="1.42" ry="0.97"/><ellipse cx="1100.8" cy="446.6" rx="1.21" ry="0.82"/><ellipse cx="1090.5" cy="457.8" rx="1.24" ry="0.84"/><ellipse cx="1080.2" cy="469.1" rx="1.26" ry="0.86"/><ellipse cx="1069.9" cy="480.3" rx="1.29" ry="0.88"/><ellipse cx="1059.6" cy="491.6" rx="1.32" ry="0.90"/><ellipse cx="1049.2" cy="502.8" rx="1.35" ry="0.92"/><ellipse cx="1038.9" cy="514.1" rx="1.38" ry="0.94"/><ellipse cx="1028.6" cy="525.3" rx="1.41" ry="0.96"/><ellipse cx="1018.3" cy="536.6" rx="1.44" ry="0.98"/><ellipse cx="1124.0" cy="451.6" rx="1.22" ry="0.83"/><ellipse cx="1113.7" cy="462.8" rx="1.25" ry="0.85"/><ellipse cx="1103.4" cy="474.1" rx="1.28" ry="0.87"/><ellipse cx="1093.0" cy="485.3" rx="1.31" ry="0.89"/><ellipse cx="1082.7" cy="496.6" rx="1.33" ry="0.91"/><ellipse cx="1072.4" cy="507.8" rx="1.36" ry="0.93"/><ellipse cx="1062.1" cy="519.1" rx="1.39" ry="0.95"/><ellipse cx="1051.8" cy="530.4" rx="1.42" ry="0.97"/><ellipse cx="1136.8" cy="467.8" rx="1.26" ry="0.86"/><ellipse cx="1126.5" cy="479.1" rx="1.29" ry="0.88"/><ellipse cx="1116.2" cy="490.3" rx="1.32" ry="0.90"/><ellipse cx="1105.9" cy="501.6" rx="1.35" ry="0.92"/><ellipse cx="1095.6" cy="512.9" rx="1.38" ry="0.94"/><ellipse cx="1085.3" cy="524.1" rx="1.40" ry="0.95"/><ellipse cx="1075.0" cy="535.4" rx="1.43" ry="0.97"/><ellipse cx="1149.7" cy="484.1" rx="1.30" ry="0.89"/><ellipse cx="1139.4" cy="495.4" rx="1.33" ry="0.91"/><ellipse cx="1129.1" cy="506.6" rx="1.36" ry="0.92"/><ellipse cx="1118.8" cy="517.9" rx="1.39" ry="0.94"/></g></g><g fill="#9c9c9c"><ellipse cx="1082" cy="471.500" rx="2.100" ry="1.400"/><ellipse cx="1034" cy="500.500" rx="2.100" ry="1.400"/><ellipse cx="1103" cy="527" rx="2.200" ry="1.500"/><ellipse cx="1144" cy="499.500" rx="2.100" ry="1.400"/><ellipse cx="1103.500" cy="527" rx="2.200" ry="1.500"/></g><ellipse cx="1071" cy="492" rx="14.300" ry="6.800" fill="#c6c6c6"/><path d="M1057.500 493.500 A14.300 6.800 0 0 1 1084.500 493.500 A14.300 5 0 0 0 1057.500 493.500Z" fill="#efefef"/><path d="M1062 495 q6 -4 16 -3" stroke="#e8e8e8" stroke-width=".8" fill="none"/></g>
<g id="box"><polygon points="950.6,474.1 955.4,472.2 955.4,477.4 950.6,476" fill="#b5b5b5"/><polygon points="956.4,471.2 965,467.4 965.9,473.6 965.9,477.4" fill="#ababab"/><polygon points="986,462.1 1032.9,440.6 1033.9,465 986,490.8" fill="#d0d0d0"/><polygon points="964,467.8 981.2,459.7 986,462.1 986,490.8 965.9,481.2 965.9,473.6" fill="#a3a3a3"/><path d="M986.0 477.4 L991.3 475.3 L993.7 477.4" stroke="#f1f1f1" stroke-width=".7" fill="none"/><polygon points="995.6,476.5 1003.3,473.1 1003.7,476.9 996.1,480.5" fill="#f3f3f3"/><polygon points="1009,470.2 1015.7,467.2 1016,470.9 1009.5,474.1" fill="#f3f3f3"/><polygon points="1019.5,465.2 1025.3,462.6 1025.6,465.9 1020,468.6" fill="#f3f3f3"/><circle cx="969.3" cy="477.4" r="2.3" fill="#e4e4e4"/><circle cx="973.4" cy="480.3" r=".9" fill="#f4f4f4"/></g>
<rect x="930" y="481" width="5.800" height="35.700" fill="#cdcdcd"/><rect x="930" y="481" width="2" height="35.700" fill="#b9b9b9"/>
<rect x="1087.900" y="398" width="3.300" height="32.500" fill="#c6c6c6"/>
<g id="bluesmall"><line x1="1035.8" y1="452.0" x2="1035.8" y2="478.4" stroke="#2a86e4" stroke-width="11.5"/><ellipse cx="1035.800" cy="478.400" rx="5.750" ry="1.800" fill="#2a86e4"/><path d="M1034.400 428 L1020.500 451.500 Q1022 456 1035 458.300 Q1048 456 1049.700 450.600 Z" fill="#2f8ff0"/><path d="M1034.400 428 L1020.500 451.500 Q1022 456 1030 457.500 Z" fill="#1f6fc6"/></g>
<g id="upperplate"><path d="M1098.500 391.500 L1098.500 395.500 L936 479 Q928 481.500 919.600 474 Q909 463 905.100 445 Q905 436 910 431.500 Q916 427.500 935 426.800 Q950 424 965.600 414.500 L1000 395 Q1008 388 1013.300 386.200 Q1032 382.500 1050.600 382.700 Q1075 385 1098.500 391.500Z" transform="translate(0 3.6)" fill="#f0f0f0"/><path d="M1098.500 391.500 L1098.500 395.500 L936 479 Q928 481.500 919.600 474 Q909 463 905.100 445 Q905 436 910 431.500 Q916 427.500 935 426.800 Q950 424 965.600 414.500 L1000 395 Q1008 388 1013.300 386.200 Q1032 382.500 1050.600 382.700 Q1075 385 1098.500 391.500Z" fill="#dedede"/><path d="M1096 402 L944 481" stroke="#c4c4c4" stroke-width="1" fill="none"/></g>
<g fill="#a6a6a6"><ellipse cx="1029" cy="394.2" rx="1.25" ry=".85"/><ellipse cx="1047.4" cy="413.7" rx="1.25" ry=".85"/><ellipse cx="1062.6" cy="405.8" rx="1.25" ry=".85"/><ellipse cx="1076.3" cy="399" rx="1.25" ry=".85"/><ellipse cx="1090.5" cy="392.1" rx="1.25" ry=".85"/><ellipse cx="967.4" cy="438.4" rx="1.25" ry=".85"/><ellipse cx="984.7" cy="445.8" rx="1.25" ry=".85"/><ellipse cx="917.3" cy="432.9" rx="1.25" ry=".85"/><ellipse cx="915.8" cy="449" rx="1.25" ry=".85"/><ellipse cx="931.9" cy="455.9" rx="1.25" ry=".85"/><ellipse cx="950.3" cy="432.2" rx="1.25" ry=".85"/><ellipse cx="967.1" cy="439" rx="1.25" ry=".85"/><ellipse cx="949.5" cy="463.6" rx="1.25" ry=".85"/><ellipse cx="931.9" cy="472.7" rx="1.25" ry=".85"/><ellipse cx="1012" cy="430" rx="1.25" ry=".85"/><ellipse cx="1030" cy="422" rx="1.25" ry=".85"/><ellipse cx="966" cy="455" rx="1.25" ry=".85"/><ellipse cx="1000" cy="437" rx="1.25" ry=".85"/></g>
<g id="lidargreen"><polygon points="1022.1,401.6 1055.3,388.2 1058.4,393.9 1024.2,410.7" fill="#8fe81a"/><path d="M1043.2 387.6 Q1044.2 381.1 1052.6 380.0 Q1061.1 382.6 1064.2 392.6 L1063.7 396.3 L1057.9 394.2 Q1054.7 389.5 1049.5 390.5 Q1044.2 390.5 1043.2 387.6Z" fill="#6fb80f"/><path d="M1052.6 380.0 L1069.5 385.8 L1063.7 396.3 Q1063.7 385.3 1052.6 380.0Z" fill="#9af21e"/></g>
<g id="lidar"><polygon points="966.700,399.600 993,386 1022.800,398.600 1024.800,420.200 998,433.400 968.700,420.200" fill="#232323"/><polygon points="966.700,399.600 998.500,413 998,433.400 968.700,420.200" fill="#1c1c1c"/><polygon points="998.500,413 1022.800,398.600 1024.800,420.200 998,433.400" fill="#262626"/><path d="M974 389 V402.500 A20.100 8 0 0 0 1014.200 402.500 V389 Z" fill="#222"/><ellipse cx="994.100" cy="389" rx="20.100" ry="8" fill="#292929"/><g fill="none" stroke="#9a9a9a" stroke-width=".7"><ellipse cx="971.500" cy="400.500" rx="2" ry="1.200"/><ellipse cx="995" cy="409.500" rx="2" ry="1.200"/><ellipse cx="1018.500" cy="398.500" rx="2" ry="1.200"/></g><circle cx="1005.500" cy="390" r="1" fill="#777"/><g fill="none" stroke="#d8d8d8" stroke-width=".9"><path d="M975.500 421.500 l7.500 3.400 v5 l-7.500 -3.400z"/><path d="M978 425 l3 1.400"/></g></g>
<g id="blueup"><line x1="993.2" y1="337.0" x2="993.2" y2="387.5" stroke="#2a86e4" stroke-width="13"/><ellipse cx="993.200" cy="387.500" rx="6.500" ry="2.300" fill="#2a86e4"/><ellipse cx="992.200" cy="337" rx="15.300" ry="5" fill="#1f6fc6"/><polygon points="991.300,310.500 976.900,337 1007.500,337" fill="#2f8ff0"/></g>
<g id="lidarred"><polygon points="1008.9,424.2 1010.5,422.1 1013.2,421.4 1065.8,437.4 1055.3,452.1 1009.3,427.6" fill="#963648"/><polygon points="1009.1,425.8 1058.9,447.4 1055.3,452.1 1009.3,427.6" fill="#7a2a38"/><polygon points="1066.3,433.5 1084.7,455.3 1056.3,459.7 1054.7,450.5" fill="#a63f52"/><polygon points="1060.5,443.2 1084.7,455.3 1056.3,459.7 1054.7,450.5" fill="#7a2a38"/><polygon points="1034.7,427.7 1037.1,432.4 1032.6,431.2" fill="#2f8ff0"/></g>
<g id="rwblue"><line x1="1209.0" y1="484.8" x2="1245.0" y2="476.5" stroke="#2a86e4" stroke-width="9.5"/><ellipse cx="1246" cy="478.300" rx="6" ry="13.300" transform="rotate(-12 1246 478.300)" fill="#1f6fc6"/><polygon points="1266.600,474 1243.200,465.200 1249,491.600" fill="#2f8ff0"/></g>
<g id="camarrows"><line x1="1167.6" y1="546.0" x2="1167.6" y2="567.0" stroke="#963648" stroke-width="11"/><ellipse cx="1166" cy="566" rx="11.500" ry="3" fill="#963648"/><polygon points="1154.600,566 1177.500,566 1166.500,580.500" fill="#7a2a38"/><line x1="1140.3" y1="554.0" x2="1140.3" y2="624.0" stroke="#963648" stroke-width="11"/><rect x="1134.800" y="554" width="4" height="70" fill="#7a2a38"/><ellipse cx="1138" cy="623.500" rx="14.600" ry="3.600" fill="#a63f52"/><polygon points="1123.400,623.500 1152.600,623.500 1137.700,645.200" fill="#7a2a38"/><polygon points="1199.500,499.300 1208.800,500.800 1205,513" fill="#9af21e"/><ellipse cx="1197.600" cy="510.800" rx="9.300" ry="13" transform="rotate(22 1197.600 510.800)" fill="#6fb80f"/><line x1="1143.0" y1="543.0" x2="1195.0" y2="511.5" stroke="#8fe81a" stroke-width="10.8"/><ellipse cx="1195" cy="511.500" rx="3.600" ry="5.400" transform="rotate(28 1195 511.500)" fill="#9af21e"/><line x1="1141.0" y1="547.5" x2="1222.0" y2="586.5" stroke="#2a86e4" stroke-width="11"/><path d="M1248 594.200 L1228 568 Q1221 570 1215.500 582 Q1211.500 592 1213 598.500 Z" fill="#2f8ff0"/><path d="M1248 594.200 L1213 598.500 Q1211.800 593 1214 586 Z" fill="#1f6fc6"/></g>
<g id="frontwheel"><path d="M985.3 544.0 C991.2 542.4 996.3 542.6 1002.5 542.8 C1008.7 543.0 1016.8 543.1 1022.3 545.0 C1027.8 546.9 1030.8 550.8 1035.2 553.9 C1039.7 557.0 1044.4 560.1 1049.0 563.4 C1053.6 566.7 1059.6 569.3 1062.8 573.8 C1066.0 578.2 1067.9 584.5 1068.3 590.1 C1068.7 595.7 1065.5 601.5 1065.4 607.3 C1065.3 613.0 1068.2 618.3 1067.6 624.6 C1067.0 630.9 1065.4 639.4 1061.9 645.2 C1058.4 651.0 1053.1 655.6 1046.4 659.4 C1039.7 663.2 1029.7 667.4 1021.5 668.0 C1013.3 668.6 1004.8 665.2 997.3 663.3 C989.8 661.4 983.9 659.3 976.7 656.4 C969.5 653.5 960.6 650.7 954.3 646.1 C948.0 641.5 942.3 635.9 939.1 628.9 C935.9 621.9 934.5 611.2 935.0 603.9 C935.5 596.6 940.0 591.1 942.2 584.9 C944.4 578.7 944.1 572.3 948.3 566.9 C952.5 561.5 961.0 556.0 967.2 552.2 C973.4 548.4 979.4 545.6 985.3 544.0Z" fill="#1b1b1b"/><rect x="984.8" y="543.5" width="38.8" height="15.8" rx="6.7" transform="rotate(4 1004.2 551.4)" fill="#262626"/><rect x="1006.0" y="567.3" width="43.1" height="19.8" rx="8.3" transform="rotate(33 1027.5 577.2)" fill="#282828"/><rect x="1039.5" y="570.7" width="32.7" height="16.4" rx="6.9" transform="rotate(52 1055.9 578.9)" fill="#242424"/><rect x="1043.9" y="606.9" width="20.7" height="38.8" rx="8.7" transform="rotate(8 1054.2 626.3)" fill="#242424"/><rect x="1018.8" y="645.2" width="32.7" height="17.2" rx="7.2" transform="rotate(-28 1035.2 653.8)" fill="#222"/><rect x="938.0" y="592.2" width="20.7" height="38.8" rx="8.7" transform="rotate(6 948.3 611.6)" fill="#242424"/><rect x="944.8" y="558.2" width="39.6" height="22.4" rx="9.4" transform="rotate(-38 964.6 569.4)" fill="#252525"/><rect x="950.8" y="636.2" width="32.7" height="16.4" rx="6.9" transform="rotate(32 967.2 644.4)" fill="#222"/><g fill="none" stroke="#8f8f8f" stroke-width=".55" opacity=".8"><path d="M984.4 560.8 l1 8 M1021.5 553.9 l-2 7 M1009.4 567.7 l-4 6 M1043.8 586.7 l-3 6 M1057.6 603.9 l-5 4 M942.2 591.8 l5 4 M976.7 584.9 l6 -3 M1043.8 647.0 l3 5 M1002.5 660.7 l-3 -5"/></g><ellipse cx="999.1" cy="619.4" rx="37" ry="32" transform="rotate(-12 999.1 619.4)" fill="#1d1d1d" stroke="#2c2c2c" stroke-width="2"/><ellipse cx="999.1" cy="619.4" rx="27" ry="23" transform="rotate(-12 999.1 619.4)" fill="none" stroke="#2a2a2a" stroke-width="1.500"/><ellipse cx="999.1" cy="619.4" rx="19.300" ry="16.300" transform="rotate(-12 999.1 619.4)" fill="#333" stroke="#b0b0b0" stroke-width=".8"/><ellipse cx="1000.6" cy="620.9" rx="15.500" ry="13" transform="rotate(-12 999.1 619.4)" fill="#262626"/><g fill="#303030" stroke="#b5b5b5" stroke-width=".7"><ellipse cx="975.3" cy="599.1" rx="2.600" ry="2.200"/><ellipse cx="1005.1" cy="595.3" rx="2.600" ry="2.200"/><ellipse cx="1027.8" cy="615.4" rx="2.600" ry="2.200"/><ellipse cx="1020.2" cy="638.7" rx="2.600" ry="2.200"/><ellipse cx="968.9" cy="622.3" rx="2.600" ry="2.200"/><rect x="965.6" y="603.4" width="9" height="13" rx="2" transform="rotate(12 970.1 609.9)"/><rect x="1010.5" y="600.4" width="15" height="7" rx="2" transform="rotate(38 1018.0 603.9)"/><rect x="999.3" y="638.6" width="15" height="7" rx="2" transform="rotate(-6 1006.8 642.1)"/></g><polygon points="1006.0,605.6 1014.6,612.5 1011.1,614.6 1005.1,612.5" fill="#8fe81a"/><polygon points="1004.6,613.4 1010.6,614.6 1009.1,622.8 1003.4,624.6" fill="#963648"/></g>
<g id="fwarrows"><line x1="1006.0" y1="664.0" x2="1006.0" y2="684.0" stroke="#963648" stroke-width="10.5"/><rect x="1000.700" y="664" width="3.500" height="20" fill="#7a2a38"/><polygon points="990.500,683.500 1021.500,683.500 1006.800,703.900" fill="#7a2a38"/><ellipse cx="1006" cy="683.300" rx="15.500" ry="5.600" fill="#a63f52"/><line x1="1006.0" y1="676.0" x2="1006.0" y2="684.0" stroke="#963648" stroke-width="10.5"/><ellipse cx="1006" cy="684" rx="5.250" ry="1.800" fill="#963648"/><rect x="1000.700" y="676" width="3.500" height="8.500" fill="#7a2a38"/><line x1="1001.2" y1="606.5" x2="981.5" y2="662.0" stroke="#2a86e4" stroke-width="12.8"/><ellipse cx="1001.200" cy="606.500" rx="6.400" ry="2.600" transform="rotate(20 1001.200 606.500)" fill="#2f8ff0"/><path d="M970.600 691.700 L961.800 668 Q962 662 972 661.500 Q990 663 995 671.500 Z" fill="#2f8ff0"/><path d="M970.600 691.700 L961.800 668 Q962 664 966 662.500 Q968 675 970.600 691.700 Z" fill="#1f6fc6"/><line x1="986.0" y1="649.5" x2="981.5" y2="662.0" stroke="#2a86e4" stroke-width="12.8"/><path d="M975.600 660 Q981 664.500 987.600 664.200 L990 657 L978 653 Z" fill="#2a86e4"/><polygon points="1063,606 1101,611.500 1101,624 1063,620.500" fill="#8fe81a"/><polygon points="1063,616 1101,620 1101,624 1063,620.500" fill="#6fb80f"/><polygon points="1101,600.400 1132.200,619 1099.800,634" fill="#9af21e"/><polygon points="1100.500,622 1132.200,619 1099.800,634" fill="#6fb80f"/></g>
<g id="lwarrows"><polygon points="864.500,441.700 874,437.500 881,460 871,457" fill="#1f6fc6"/><ellipse cx="880.100" cy="448.200" rx="9.300" ry="12.300" transform="rotate(-18 880.100 448.200)" fill="#2f8ff0"/><line x1="881.5" y1="448.8" x2="892.0" y2="453.2" stroke="#1f6fc6" stroke-width="7.7"/><ellipse cx="881.500" cy="448.800" rx="2.700" ry="3.850" transform="rotate(-18 881.500 448.800)" fill="#1f6fc6"/><line x1="873.0" y1="505.0" x2="900.5" y2="490.4" stroke="#8fe81a" stroke-width="10"/><path d="M851 513.600 L864.500 491.900 Q872 497 878.300 515.600 Z" fill="#9af21e"/><path d="M851 513.600 L878.300 515.600 Q876.500 509 873.500 504 Z" fill="#6fb80f"/></g><!--/ROBOT-->
</svg>

<!-- toolbar -->
<div style="left:1505.3px;top:120.2px;width:29.4px;height:29.4px;background:#252528;border-radius:3px"></div>
<div style="left:1505.3px;top:159.7px;width:29.4px;height:58.8px;background:#252528;border-radius:3px"></div>
<div style="left:1505.3px;top:228.6px;width:29.4px;height:29.2px;background:#252528;border-radius:3px"></div>
<svg style="left:1511px;top:126px" width="18" height="18" viewBox="0 0 18 18"><path d="M4.2 2.2 L15.6 8.8 L9 10.3 L5.6 16 Z" fill="none" stroke="#d8d8dc" stroke-width="1.15" stroke-linejoin="round"/></svg>
<div class="t" style="left:1505.3px;width:29.4px;text-align:center;top:166px;color:#35b4e6;font-size:9px;font-weight:700;letter-spacing:0">3D</div>
<svg style="left:1510px;top:194px" width="20" height="20" viewBox="0 0 20 20"><g transform="rotate(-38 10 10)"><rect x="2" y="6.3" width="16" height="7.4" rx="1.2" fill="none" stroke="#d8d8dc" stroke-width="1.2"/><path d="M5 6.3 v2.6 M7.5 6.3 v2.6 M10 6.3 v2.6 M12.500 6.3 v2.6 M15 6.3 v2.6" stroke="#d8d8dc" stroke-width="1"/></g></svg>
<svg style="left:1510px;top:233px" width="20" height="20" viewBox="0 0 20 20"><rect x="5.700" y="5.700" width="8.600" height="8.600" rx="2" fill="#f2f2f4"/><g fill="none" stroke="#c8c8cc" stroke-width="1.1"><path d="M7.800 3.200 L10 1.300 L12.200 3.200"/><path d="M7.800 16.800 L10 18.700 L12.200 16.800"/><path d="M3.200 7.800 L1.300 10 L3.200 12.200"/><path d="M16.800 7.800 L18.700 10 L16.800 12.200"/></g></svg>

<!-- BOTTOM BAR -->
<div id="bottombar" style="left:55px;top:926px;width:1490px;height:45px;background:#29292c"></div>


<div style="left:55px;top:925.5px;width:537px;height:1.2px;background:#4b4b52"></div>
<svg style="left:70px;top:940px" width="16" height="18" viewBox="0 0 16 18"><path d="M2.600 2.400 H13.400 V12.800 L8 16 L2.600 12.800 Z" fill="none" stroke="#8e8e93" stroke-width="1.3" stroke-linejoin="round"/></svg>
<svg style="left:103px;top:940px" width="18" height="18" viewBox="0 0 18 18"><circle cx="9" cy="9" r="7.600" fill="none" stroke="#8e8e93" stroke-width="1.100"/><rect x="8.400" y="7.700" width="1.200" height="5" fill="#8e8e93"/><circle cx="9" cy="5.600" r=".85" fill="#8e8e93"/></svg>
<svg style="left:137px;top:941px" width="17" height="16" viewBox="0 0 17 16"><g fill="none" stroke="#4e4e53" stroke-width="1.100"><path d="M1.500 8 V3 Q1.500 1.500 3 1.500 H14 Q15.500 1.500 15.500 3 V8"/><path d="M3.500 11 L1.500 13 L3.500 15 M13.500 11 L15.500 13 L13.500 15 M5.500 13 h1.500 M8 13 h1.500 M10.500 13 h1.500" stroke-width="1"/></g></svg>
<!-- playback -->
<svg style="left:753px;top:940px" width="19" height="18" viewBox="0 0 19 18"><path d="M3 2.300 V15.700" stroke="#6f6f74" stroke-width="1.200" fill="none"/><path d="M16 2.600 V15.400 L6 9 Z" fill="none" stroke="#6f6f74" stroke-width="1.200" stroke-linejoin="round"/></svg>
<svg style="left:792px;top:940px" width="19" height="18" viewBox="0 0 19 18"><path d="M3.500 2.600 V15.400 L15.500 9 Z" fill="none" stroke="#6f6f74" stroke-width="1.200" stroke-linejoin="round"/></svg>
<svg style="left:828px;top:940px" width="19" height="18" viewBox="0 0 19 18"><path d="M16 2.300 V15.700" stroke="#6f6f74" stroke-width="1.200" fill="none"/><path d="M3 2.600 V15.400 L13 9 Z" fill="none" stroke="#6f6f74" stroke-width="1.200" stroke-linejoin="round"/></svg>
<!-- loop off -->
<svg style="left:1512.500px;top:939px" width="20" height="20" viewBox="0 0 20 20"><g fill="none" stroke="#707075" stroke-width="1.100" stroke-linecap="round"><path d="M3.300 10.500 A6.200 5.600 0 0 1 9 4.600 H15.500 M13.200 2.300 L15.600 4.600 L13.200 6.900"/><path d="M16.700 9.500 A6.200 5.600 0 0 1 11 15.400 H4.500 M6.800 13.100 L4.400 15.400 L6.800 17.700"/><path d="M2.800 2.200 L17.400 17.600"/></g></svg>

</div></div>
</body>
</html>
